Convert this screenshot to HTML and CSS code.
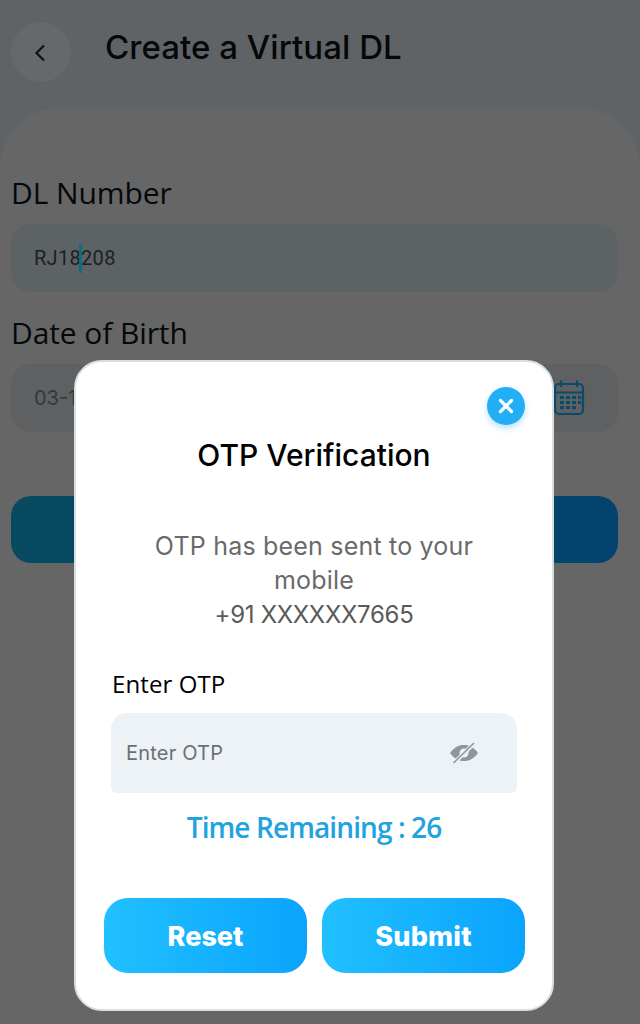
FILE: index.html
```html
<!DOCTYPE html>
<html lang="en">
<head>
<meta charset="utf-8">
<title>Create a Virtual DL</title>
<link rel="stylesheet" href="styles.css">
</head>
<body>
<div class="page">
  <header class="topbar">
    <div class="back">
      <svg width="14" height="20" viewBox="0 0 14 20"><path d="M11 2.500L3.500 10L11 17.500" fill="none" stroke="#0e1215" stroke-width="2.200"/></svg>
    </div>
    <h1 class="title">Create a Virtual DL</h1>
  </header>
  <main class="sheet">
    <label class="field-label">DL Number</label>
    <div class="input input-dl"><span class="dl-text">RJ18</span><span class="caret"></span><span class="dl-text">208</span></div>
    <label class="field-label label-dob">Date of Birth</label>
    <div class="input input-dob">
      <span class="dob-text">03-11-1990</span>
      <svg class="cal" width="32" height="38" viewBox="0 0 32 38">
        <g fill="none" stroke="#074c6c" stroke-width="2.200">
          <rect x="2" y="5" width="28" height="30" rx="4"/>
          <path d="M2 13.500H30M8 1.500V8M24 1.500V8"/>
        </g>
        <g fill="#074c6c">
          <rect x="7" y="17" width="4" height="3"/><rect x="13" y="17" width="4" height="3"/><rect x="19" y="17" width="4" height="3"/><rect x="25" y="17" width="3" height="3"/>
          <rect x="7" y="22" width="4" height="3"/><rect x="13" y="22" width="4" height="3"/><rect x="19" y="22" width="4" height="3"/><rect x="25" y="22" width="3" height="3"/>
          <rect x="7" y="27" width="4" height="3"/><rect x="13" y="27" width="4" height="3"/><rect x="19" y="27" width="4" height="3"/>
        </g>
      </svg>
    </div>
    <div class="page-btn"></div>
  </main>
</div>

<section class="modal">
  <button class="close" type="button" aria-label="Close">
    <svg width="16" height="16" viewBox="0 0 16 16"><path d="M2.500 2.500L13.500 13.500M13.500 2.500L2.500 13.500" stroke="#fff" stroke-width="3.200" stroke-linecap="round"/></svg>
  </button>
  <h2 class="modal-title">OTP Verification</h2>
  <p class="modal-msg">OTP has been sent to your<br>mobile<br><span class="phone">+91 XXXXXX7665</span></p>
  <div class="otp-label">Enter OTP</div>
  <div class="otp-input">
    <span class="otp-ph">Enter OTP</span>
    <svg class="eye" width="30" height="22" viewBox="0 0 30 22">
      <path d="M1 11C5 5.500 9.500 3 15 3C20.500 3 25 5.500 29 11C25 16.500 20.500 19 15 19C9.500 19 5 16.500 1 11Z" fill="#8f959a"/>
      <circle cx="15" cy="11" r="4.500" fill="#edf2f6"/>
      <path d="M4.500 21.500L25.500 1" stroke="#edf2f6" stroke-width="4"/>
      <path d="M4.500 21L25 1" stroke="#8f959a" stroke-width="1.600"/>
    </svg>
  </div>
  <div class="timer">Time Remaining : 26</div>
  <div class="actions">
    <button class="action" type="button">Reset</button>
    <button class="action action-submit" type="button">Submit</button>
  </div>
</section>
</body>
</html>
```
FILE: styles.css
```css
* { box-sizing: border-box; }
html, body { margin: 0; height: 1024px; overflow: hidden; }
body { background: #5f6365; position: relative; font-family: "Open Sans", sans-serif; }

.page { height: 1024px; display: flex; flex-direction: column; }
.topbar { height: 108px; display: flex; align-items: flex-start; padding: 22px 0 0 11px; flex: none; }
.back { width: 60px; height: 60px; border-radius: 50%; background: #666869; display: flex; align-items: center; justify-content: center; padding: 2px 2px 0 0; }
.title { margin: 5px 0 0 34px; font: 500 33px/40px "Inter", sans-serif; letter-spacing: 0.05px; color: #05080a; }

.sheet { flex: 1; background: #666666; border-radius: 60px 60px 0 0; padding: 64px 22px 0 11px; display: flex; flex-direction: column; }
.field-label { font: 500 30px/42px "Open Sans", sans-serif; letter-spacing: -0.1px; color: #05080a; height: 42px; }
.label-dob { margin-top: 20px; }
.input { height: 68px; border-radius: 20px; background: #5d6264; margin-top: 10px; display: flex; align-items: center; padding-left: 23px; flex: none; }
.dl-text { font: 400 20px/24px "Roboto", sans-serif; letter-spacing: 0.3px; color: #1c2124; }
.caret { width: 3px; height: 29px; background: #0f6d7f; margin: 0 -1px 0 -2px; }
.input-dob { background: #5e6061; margin-top: 10px; justify-content: space-between; padding-right: 33px; }
.dob-text { font: 400 20px/24px "Inter", sans-serif; color: #34383b; }
.page-btn { height: 67px; border-radius: 20px; margin-top: 64px; background: linear-gradient(90deg, #084a60, #03446f); flex: none; }

.modal { position: absolute; left: 74px; top: 360px; width: 480px; height: 651px; background: #fff; border: 2px solid #d8dfe4; border-radius: 28px; display: flex; flex-direction: column; padding: 0 28px; }
.close { position: absolute; top: 25px; right: 27px; width: 38px; height: 38px; border: 0; padding: 0; border-radius: 50%; background: #22aff5; box-shadow: 0 3px 6px rgba(30,170,240,.35); display: flex; align-items: center; justify-content: center; }
.modal-title { margin: 73px 0 0; text-align: center; font: 500 30px/40px "Inter", sans-serif; letter-spacing: 0; color: #000; }
.modal-msg { margin: 54px 0 0; text-align: center; font: 400 25px/34px "Inter", sans-serif; letter-spacing: 0.2px; color: #6a6a6a; }
.phone { color: #5a5a5a; font-size: 24px; letter-spacing: -0.3px; }
.otp-label { font: 500 24px/34px "Open Sans", sans-serif; letter-spacing: 0.1px; color: #000; margin: 35px 0 0 8px; }
.otp-input { height: 80px; margin: 12px 7px 0 7px; border-radius: 16px 16px 6px 6px; background: #edf2f6; display: flex; align-items: center; justify-content: space-between; padding: 0 38px 0 15px; flex: none; }
.otp-ph { font: 400 20px/26px "Inter", sans-serif; letter-spacing: 0.2px; color: #6c7073; }
.timer { text-align: center; font: 600 28px/38px "Open Sans", sans-serif; color: #22a3e0; margin-top: 15px; letter-spacing: -0.9px; }
.actions { display: flex; gap: 15px; margin-top: 52px; }
.action { flex: none; width: 203px; height: 75px; border: 0; border-radius: 24px; padding: 3px 0 0; background: linear-gradient(90deg, #21c0ff, #0aa4fd); color: #fff; font: 800 27px/32px "Inter", sans-serif; }
.action-submit { letter-spacing: 0.2px; }
```
